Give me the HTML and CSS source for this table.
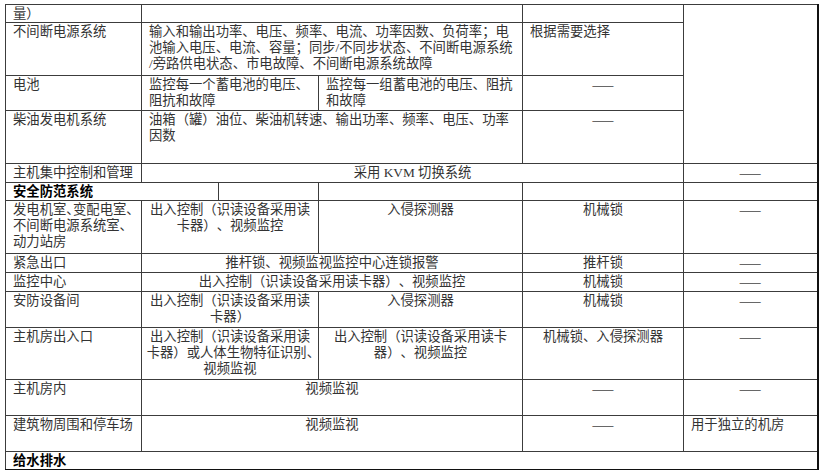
FILE: index.html
```html
<!DOCTYPE html>
<html lang="zh-CN">
<head>
<meta charset="utf-8">
<title>表格</title>
<link rel="stylesheet" href="styles.css">
</head>
<body>
<table class="spec">
  <colgroup>
    <col class="c1"><col class="c2"><col class="c3"><col class="c4"><col class="c5"><col class="c6">
  </colgroup>
  <tr class="h18">
    <td>量）</td>
    <td colspan="3"></td>
    <td></td>
    <td rowspan="4"></td>
  </tr>
  <tr class="h53">
    <td>不间断电源系统</td>
    <td colspan="3">输入和输出功率、电压、频率、电流、功率因数、负荷率；电<br>池输入电压、电流、容量；同步/不同步状态、不间断电源系统<br>/旁路供电状态、市电故障、不间断电源系统故障</td>
    <td>根据需要选择</td>
  </tr>
  <tr class="h35">
    <td>电池</td>
    <td colspan="2">监控每一个蓄电池的电压、<br>阻抗和故障</td>
    <td>监控每一组蓄电池的电压、阻抗<br>和故障</td>
    <td class="ctr"><span class="dash">——</span></td>
  </tr>
  <tr class="h53">
    <td>柴油发电机系统</td>
    <td colspan="3">油箱（罐）油位、柴油机转速、输出功率、频率、电压、功率<br>因数</td>
    <td class="ctr"><span class="dash">——</span></td>
  </tr>
  <tr class="h18">
    <td>主机集中控制和管理</td>
    <td colspan="4" class="ctr">采用 KVM 切换系统</td>
    <td class="ctr"><span class="dash">——</span></td>
  </tr>
  <tr class="h17">
    <td colspan="2" class="bold">安全防范系统</td>
    <td></td>
    <td></td>
    <td></td>
    <td></td>
  </tr>
  <tr class="h53">
    <td>发电机室<span class="half">、</span>变配电室、<br>不间断电源系统室、<br>动力站房</td>
    <td colspan="2" class="ctr">出入控制（识读设备采用读<br>卡器）、视频监控</td>
    <td class="ctr">入侵探测器</td>
    <td class="ctr">机械锁</td>
    <td class="ctr"><span class="dash">——</span></td>
  </tr>
  <tr class="h18">
    <td>紧急出口</td>
    <td colspan="3" class="ctr">推杆锁、视频监视监控中心连锁报警</td>
    <td class="ctr">推杆锁</td>
    <td class="ctr"><span class="dash">——</span></td>
  </tr>
  <tr class="h18">
    <td>监控中心</td>
    <td colspan="3" class="ctr">出入控制（识读设备采用读卡器）、视频监控</td>
    <td class="ctr">机械锁</td>
    <td class="ctr"><span class="dash">——</span></td>
  </tr>
  <tr class="h36">
    <td>安防设备间</td>
    <td colspan="2" class="ctr">出入控制（识读设备采用读<br>卡器）</td>
    <td class="ctr">入侵探测器</td>
    <td class="ctr">机械锁</td>
    <td class="ctr"><span class="dash">——</span></td>
  </tr>
  <tr class="h52">
    <td>主机房出入口</td>
    <td colspan="2" class="ctr">出入控制（识读设备采用读<br>卡器）或人体生物特征识别<span class="half">、</span><br>视频监视</td>
    <td class="ctr">出入控制（识读设备采用读卡<br>器）、视频监控</td>
    <td class="ctr">机械锁、入侵探测器</td>
    <td class="ctr"><span class="dash">——</span></td>
  </tr>
  <tr class="h36">
    <td>主机房内</td>
    <td colspan="3" class="ctr">视频监视</td>
    <td class="ctr"><span class="dash">——</span></td>
    <td class="ctr"><span class="dash">——</span></td>
  </tr>
  <tr class="h36">
    <td>建筑物周围和停车场</td>
    <td colspan="3" class="ctr">视频监视</td>
    <td class="ctr"><span class="dash">——</span></td>
    <td>用于独立的机房</td>
  </tr>
  <tr class="h17">
    <td colspan="6" class="bold">给水排水</td>
  </tr>
</table>
</body>
</html>
```

FILE: styles.css
```css
html, body {
  margin: 0;
  padding: 0;
  background: #ffffff;
}

body {
  padding: 4px 0 0 5px;
  font-family: "Liberation Serif", "Noto Sans CJK SC", serif;
  font-size: 13.33px;
  line-height: 16px;
  color: #333333;
  text-spacing-trim: space-all;
}

.spec {
  border-collapse: collapse;
  table-layout: fixed;
  width: 812px;
  border-top: 1px solid #111111;
  border-left: 1px solid #111111;
  border-right: 2px solid #111111;
  border-bottom: 2px solid #111111;
}

.c1 { width: 136px; }
.c2 { width: 77px; }
.c3 { width: 100px; }
.c4 { width: 204px; }
.c5 { width: 161px; }
.c6 { width: 134px; }

.spec td {
  border: 1px solid #3c3c3c;
  padding: 1px 6px 0 7px;
  vertical-align: top;
  white-space: nowrap;
  overflow: visible;
}

.h17 { height: 17px; }
.h18 { height: 18px; }
.h35 { height: 35px; }
.h36 { height: 36px; }
.h52 { height: 52px; }
.h53 { height: 53px; }

.spec td.ctr {
  text-align: center;
  padding-left: 0;
  padding-right: 0;
}

.spec td.bold {
  font-weight: bold;
  color: #000000;
}

.half {
  letter-spacing: -0.5em;
}

.dash {
  font-family: "Noto Sans CJK SC", sans-serif;
  color: #444444;
}
```
